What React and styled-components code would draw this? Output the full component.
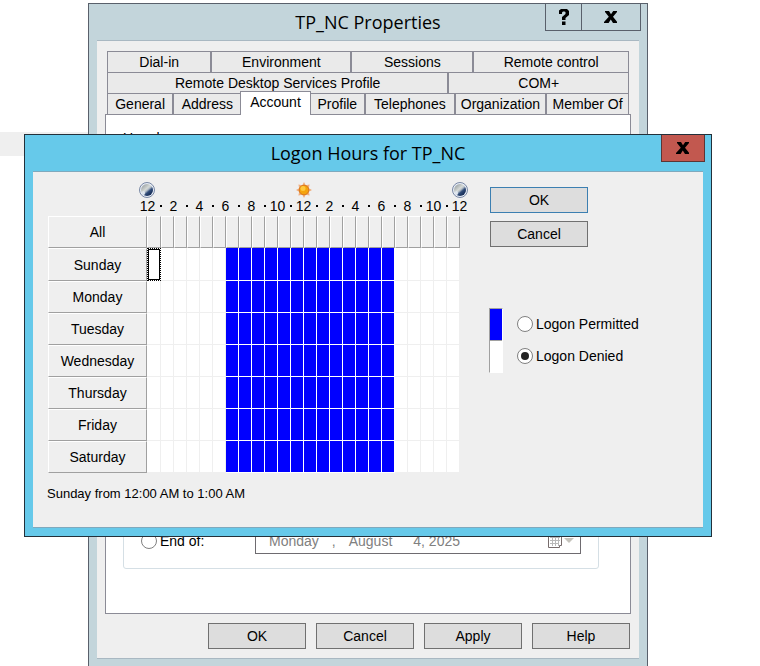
import React, { useState } from "react";
import styled, { createGlobalStyle } from "styled-components";

const GlobalStyle = createGlobalStyle`
  *, *::before, *::after { box-sizing: border-box; }
  body {
    margin: 0;
    background: #fff;
    color: #000;
    font: 14px/16px "Liberation Sans", Arial, sans-serif;
  }
  button, input { font: inherit; color: inherit; }
`;

const Desktop = styled.main`
  display: grid;
  grid-template-columns: minmax(0, 1fr);
  align-items: start;
  height: 100vh;
  min-width: 720px;
  overflow: hidden;
  > * { grid-area: 1 / 1; }
`;

const BackgroundStrip = styled.div`
  width: 88px;
  height: 24px;
  margin-top: 132px;
  background: #efefef;
`;

const Window = styled.section`
  display: flex;
  flex-direction: column;
  margin: ${(p) => p.$margin};
  padding: 0 8px 8px;
  border: 1px solid ${(p) => (p.$active ? "#23303a" : "#59606b")};
  background: ${(p) => (p.$active ? "#66c9ea" : "#c3d5db")};
`;

const TitleBar = styled.header`
  display: grid;
  grid-template-columns: minmax(0, 1fr);
  height: 36px;
  > * { grid-area: 1 / 1; }
`;

const Title = styled.h1`
  align-self: center;
  margin: 0;
  font: 400 18px/36px "Open Sans", "Noto Sans", sans-serif;
  text-align: center;
`;

const WindowControls = styled.div`
  display: flex;
  justify-self: end;
  align-self: start;
  height: 27px;
  margin-right: -2px;
  border: 1px solid ${(p) => (p.$active ? "#5c3535" : "#59606b")};
  border-top: 0;
`;

const ControlButton = styled.button`
  display: grid;
  place-items: center;
  width: ${(p) => p.$width};
  padding: 0;
  border: 0;
  background: ${(p) => (p.$danger ? "#c2584f" : "transparent")};
  & + & { border-left: 1px solid #59606b; }
`;

const Client = styled.div`
  display: flex;
  flex-direction: column;
  padding: ${(p) => p.$pad};
  border: solid ${(p) => (p.$active ? "#7fa9bd" : "#a9b8c2")};
  border-width: 1px 0;
  background: #efefef;
`;

const TabRow = styled.div`
  display: flex;
  height: 21px;
  margin: 0 2px;
`;

const Tab = styled.button`
  flex: ${(p) => p.$grow} 1 0;
  min-width: 0;
  padding: 0;
  border: 1px solid #8b8b96;
  border-bottom: 0;
  background: #eaeaea;
  white-space: nowrap;
  ${(p) => p.$selected && `
    z-index: 1;
    height: 24px;
    margin: -2px -1px 0;
    padding-bottom: 3px;
    background: #fff;
  `}
`;

const TabPanel = styled.div`
  display: flex;
  flex-direction: column;
  justify-content: space-between;
  min-height: 500px;
  padding: 15px 31px 44px 17px;
  border: 1px solid #8b8b96;
  background: #fff;
`;

const ExpiryGroup = styled.div`
  display: flex;
  align-items: center;
  justify-content: space-between;
  height: 60px;
  padding: 18px 17px 14px;
  border: 1px solid #d5dfe5;
  border-radius: 3px;
`;

const DateField = styled.div`
  display: flex;
  align-items: center;
  justify-content: space-between;
  width: 326px;
  height: 25px;
  padding: 0 6px 0 13px;
  border: 1px solid #6e6b70;
  color: #808080;
`;

const DateParts = styled.span`
  display: flex;
  gap: 0 13px;
  span:nth-child(3) { margin-right: 8px; }
`;

const Actions = styled.footer`
  display: flex;
  justify-content: flex-end;
  gap: 10px;
  padding: 9px 1px 9px;
`;

const PushButton = styled.button`
  width: 98px;
  height: 26px;
  padding: 0;
  border: 1px solid ${(p) => (p.$primary ? "#3c7fb1" : "#707070")};
  background: #dddddd;
`;

const RadioLabel = styled.label`
  display: flex;
  align-items: center;
  gap: 3px;
  height: 16px;
`;

const Radio = styled.input.attrs({ type: "radio" })`
  appearance: none;
  display: grid;
  place-items: center;
  width: 16px;
  height: 16px;
  margin: 0;
  border: 1px solid #808080;
  border-radius: 50%;
  background: #fff;
  &:checked::after {
    content: "";
    width: 8px;
    height: 8px;
    border-radius: 50%;
    background: #222;
  }
`;

const DialogBody = styled.div`
  display: flex;
  gap: 22px;
`;

const Schedule = styled.div`
  flex: 1;
  min-width: 0;
`;

const Sky = styled.div`
  display: flex;
  justify-content: space-between;
  height: 16px;
  margin: 0 -8px 0 92px;
`;

const HourScale = styled.div`
  display: grid;
  grid-template-columns: repeat(25, minmax(0, 1fr));
  height: 16px;
  margin: 0 -6px 2px 94px;
  line-height: 16px;
  span {
    display: flex;
    justify-content: center;
    align-items: center;
  }
`;

const Dot = styled.i`
  width: 2px;
  height: 2px;
  background: #000;
`;

const HourTable = styled.table`
  width: calc(100% - 1px);
  margin-left: 1px;
  border-collapse: separate;
  border-spacing: 0;
  table-layout: fixed;
  th:first-child { width: 99px; }
  th:nth-child(2) { width: 14px; }
`;

const HeaderCell = styled.th`
  height: ${(p) => (p.$tall ? "33px" : "32px")};
  padding: 0;
  border: solid;
  border-width: 1px;
  border-color: #fff #a0a0a0 #a0a0a0 #fff;
  background: #efefef;
  font-weight: 400;
`;

const HourCell = styled.td`
  height: 32px;
  padding: 0;
  border: solid ${(p) => (p.$permitted ? "#fff" : "#efefef")};
  border-width: 0 1px 1px 0;
  background: ${(p) => (p.$permitted ? "#0000ff" : "#fff")};
  ${(p) => p.$focused && `
    border: 1px dotted #000;
    box-shadow: inset 0 0 0 1px #000;
  `}
`;

const Status = styled.p`
  margin: 13px 0 0;
  font-size: 13px;
`;

const SidePane = styled.aside`
  width: 197px;
  padding-top: 5px;
`;

const ButtonStack = styled.div`
  display: flex;
  flex-direction: column;
  gap: 8px;
  margin-left: 8px;
`;

const Legend = styled.div`
  display: flex;
  gap: 14px;
  margin: 61px 0 0 7px;
`;

const Swatches = styled.div`
  width: 14px;
  height: 65px;
  border: 1px solid #a0a0a0;
  border-right-color: #fff;
  border-bottom-color: #fff;
  background: linear-gradient(#0000ff 31px, #a0a0a0 31px, #a0a0a0 32px, #fff 32px);
`;

const RadioStack = styled.div`
  display: flex;
  flex-direction: column;
  gap: 16px;
  padding-top: 8px;
`;

const CloseIcon = () => (
  <svg width="14" height="12" viewBox="0 0 14 12" aria-hidden="true">
    <path d="M1 0H5L7 3.2 9.2 0H13V1L9 5.8 13 10.8V12H9L6.8 8.4 4.6 12H0V11L4.8 5.8 1 1Z" />
  </svg>
);

const HelpIcon = () => (
  <svg width="12" height="16" viewBox="0 0 12 16" aria-hidden="true">
    <path d="M1 1.5 3 0H9L11 2V6L7.5 9V11H4V8L7.5 5V3L6.5 2.500H5L4 3.500V5H1ZM4 12.500H7.5V16H4Z" />
  </svg>
);

const MoonIcon = () => (
  <svg width="16" height="16" viewBox="0 0 16 16" aria-hidden="true">
    <defs>
      <linearGradient id="moon" x1="0.15" y1="0.1" x2="0.85" y2="0.9">
        <stop offset="0" stopColor="#9da4a6" />
        <stop offset="0.4" stopColor="#d5d9d6" />
        <stop offset="0.52" stopColor="#b5bfc8" />
        <stop offset="0.68" stopColor="#304b78" />
        <stop offset="1" stopColor="#10264f" />
      </linearGradient>
    </defs>
    <circle cx="8" cy="8" r="7.5" fill="#e9eef7" stroke="#7887a4" />
    <circle cx="8" cy="8" r="6" fill="url(#moon)" />
    <ellipse cx="4.500" cy="11" rx="1.500" ry="2" fill="#dfe6ef" />
  </svg>
);

const SunIcon = () => (
  <svg width="16" height="16" viewBox="0 0 16 16" aria-hidden="true">
    <path d="M8 0 9.700 3.200 13.600 2.400 12.800 6.200 16 8 12.800 9.800 13.600 13.600 9.700 12.800 8 16 6.300 12.800 2.400 13.600 3.200 9.800 0 8 3.200 6.200 2.400 2.400 6.300 3.200Z" fill="#f0ad7c" />
    <circle cx="8" cy="8" r="4.800" fill="#f5a30c" stroke="#d9771c" />
    <circle cx="7" cy="6.500" r="2.500" fill="#ffc93d" />
  </svg>
);

const CalendarIcon = () => (
  <svg width="26" height="14" viewBox="0 0 26 14" aria-hidden="true">
    <path d="M.5.5H13.500V11.500H11.500V13.500H.5Z" fill="#fff" stroke="#776c6c" />
    <path d="M2 3.500H12M2 6.500H12M2 9.500H11M4.500 1V12M7.500 1V12M10.500 1V12" stroke="#b8b8b8" fill="none" />
    <path d="M16 4H26L21 9Z" fill="#c5c3bc" />
  </svg>
);

const tabRows = [
  [["Dial-in", 104], ["Environment", 140], ["Sessions", 122], ["Remote control", 156]],
  [["Remote Desktop Services Profile", 342], ["COM+", 180]],
  [["General", 66], ["Address", 68], ["Account", 70], ["Profile", 55], ["Telephones", 90], ["Organization", 92], ["Member Of", 83]],
];
const days = ["Sunday", "Monday", "Tuesday", "Wednesday", "Thursday", "Friday", "Saturday"];
const hours = Array.from({ length: 24 }, (_, i) => i);
const marks = Array.from({ length: 25 }, (_, i) => i);

function PropertiesWindow() {
  const [tab, setTab] = useState("Account");
  return (
    <Window $margin="3px 112px 0 88px">
      <TitleBar>
        <Title>TP_NC Properties</Title>
        <WindowControls>
          <ControlButton $width="35px" aria-label="Help"><HelpIcon /></ControlButton>
          <ControlButton $width="59px" aria-label="Close"><CloseIcon /></ControlButton>
        </WindowControls>
      </TitleBar>
      <Client $pad="10px 8px 0">
        {tabRows.map((row) => (
          <TabRow key={row[0][0]} role="tablist">
            {row.map(([name, grow]) => (
              <Tab key={name} role="tab" aria-selected={tab === name} $grow={grow} $selected={tab === name} onClick={() => setTab(name)}>
                {name}
              </Tab>
            ))}
          </TabRow>
        ))}
        <TabPanel role="tabpanel">
          <div>User logon name:</div>
          <ExpiryGroup>
            <RadioLabel><Radio name="expiry" />End of:</RadioLabel>
            <DateField>
              <DateParts><span>Monday</span><span>,</span><span>August</span><span>4, 2025</span></DateParts>
              <CalendarIcon />
            </DateField>
          </ExpiryGroup>
        </TabPanel>
        <Actions>
          {["OK", "Cancel", "Apply", "Help"].map((t) => <PushButton key={t}>{t}</PushButton>)}
        </Actions>
      </Client>
    </Window>
  );
}

function LogonHoursDialog() {
  const [mode, setMode] = useState("denied");
  return (
    <Window $active role="dialog" aria-label="Logon Hours for TP_NC" $margin="134px 48px 0 24px">
      <TitleBar>
        <Title>Logon Hours for TP_NC</Title>
        <WindowControls $active>
          <ControlButton $width="42px" $danger aria-label="Close"><CloseIcon /></ControlButton>
        </WindowControls>
      </TitleBar>
      <Client $active $pad="10px 24px 25px 14px">
        <DialogBody>
          <Schedule>
            <Sky><MoonIcon /><SunIcon /><MoonIcon /></Sky>
            <HourScale>
              {marks.map((m) => <span key={m}>{m % 2 ? <Dot /> : m % 12 || 12}</span>)}
            </HourScale>
            <HourTable>
              <thead>
                <tr>
                  <HeaderCell scope="col">All</HeaderCell>
                  {hours.map((h) => <HeaderCell key={h} scope="col" aria-label={`${h}:00`} />)}
                </tr>
              </thead>
              <tbody>
                {days.map((day, d) => (
                  <tr key={day}>
                    <HeaderCell scope="row" $tall={d === 0}>{day}</HeaderCell>
                    {hours.map((h) => <HourCell key={h} $permitted={h >= 6 && h < 19} $focused={d === 0 && h === 0} />)}
                  </tr>
                ))}
              </tbody>
            </HourTable>
            <Status>Sunday from 12:00 AM to 1:00 AM</Status>
          </Schedule>
          <SidePane>
            <ButtonStack>
              <PushButton $primary>OK</PushButton>
              <PushButton>Cancel</PushButton>
            </ButtonStack>
            <Legend>
              <Swatches />
              <RadioStack>
                <RadioLabel><Radio name="logon" checked={mode === "permitted"} onChange={() => setMode("permitted")} />Logon Permitted</RadioLabel>
                <RadioLabel><Radio name="logon" checked={mode === "denied"} onChange={() => setMode("denied")} />Logon Denied</RadioLabel>
              </RadioStack>
            </Legend>
          </SidePane>
        </DialogBody>
      </Client>
    </Window>
  );
}

export default function App() {
  return (
    <>
      <GlobalStyle />
      <Desktop>
        <BackgroundStrip />
        <PropertiesWindow />
        <LogonHoursDialog />
      </Desktop>
    </>
  );
}
